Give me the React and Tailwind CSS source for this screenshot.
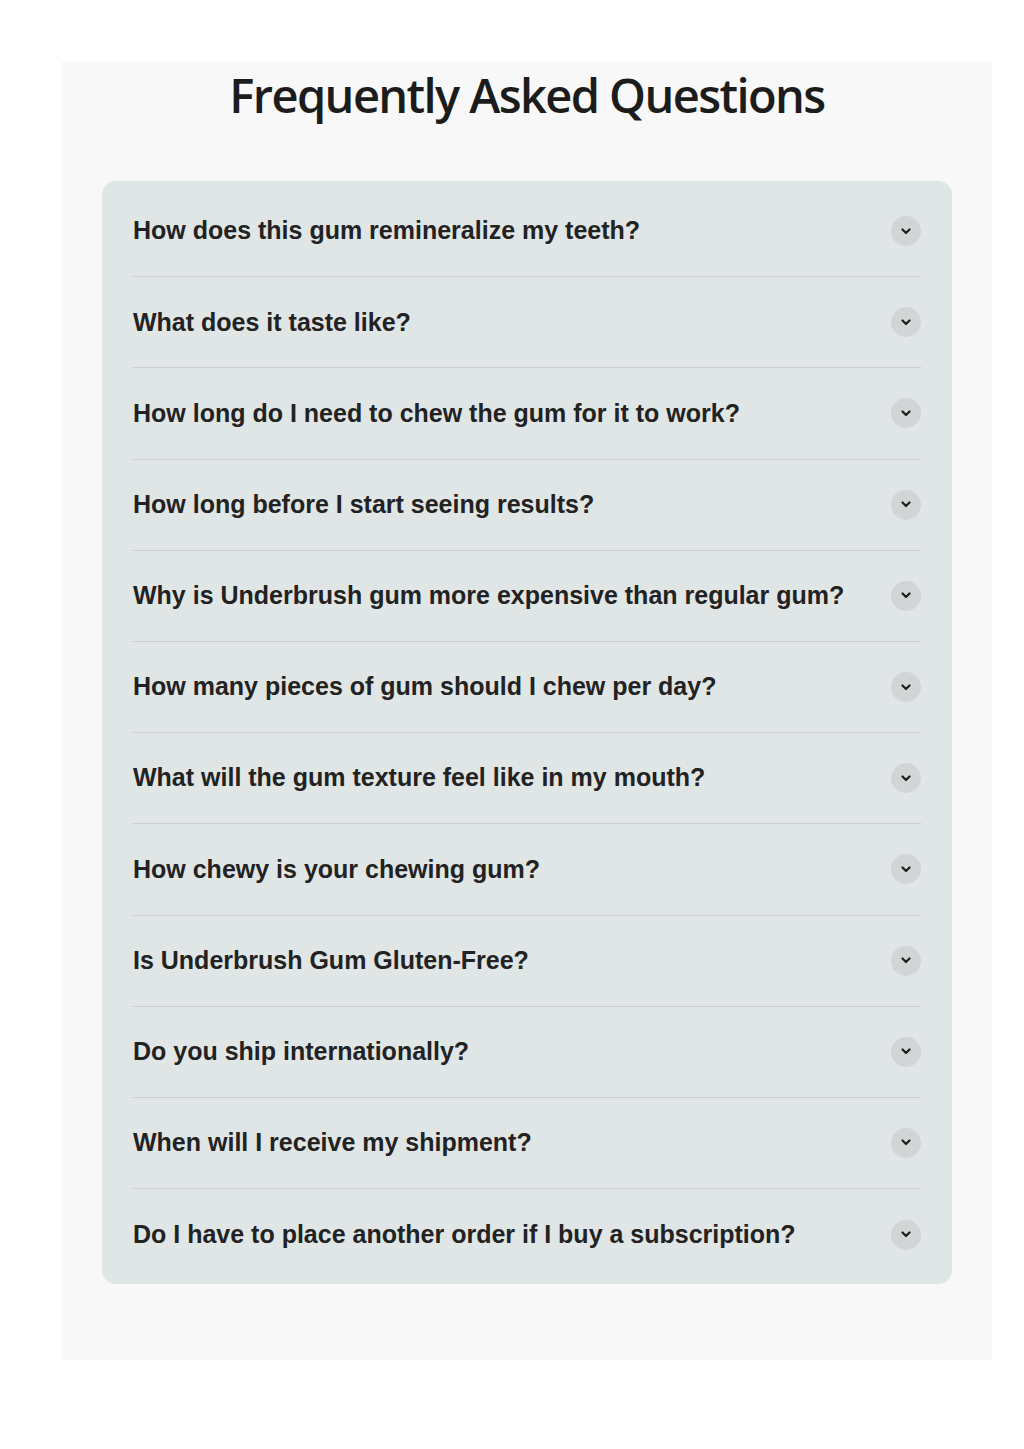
import React from 'react';

const questions = [
  'How does this gum remineralize my teeth?',
  'What does it taste like?',
  'How long do I need to chew the gum for it to work?',
  'How long before I start seeing results?',
  'Why is Underbrush gum more expensive than regular gum?',
  'How many pieces of gum should I chew per day?',
  'What will the gum texture feel like in my mouth?',
  'How chewy is your chewing gum?',
  'Is Underbrush Gum Gluten-Free?',
  'Do you ship internationally?',
  'When will I receive my shipment?',
  'Do I have to place another order if I buy a subscription?',
];

const Chevron = () => (
  <span className="w-[30px] h-[30px] rounded-full bg-[#d1d5d5] flex items-center justify-center shrink-0">
    <svg width="10" height="7" viewBox="0 0 10 7" fill="none">
      <path d="M1.5 1.5 L5 5 L8.5 1.5" stroke="#1f1f1f" strokeWidth="2.2" strokeLinecap="round" strokeLinejoin="round" />
    </svg>
  </span>
);

export default function App() {
  return (
    <div className="min-h-[1449px] bg-white pt-[62px]">
      <section className="ml-[62px] w-[930px] h-[1298px] bg-[#f8f8f8] pt-[3px]">
        {/* Title */}
        <h1 className="text-center text-[47px] leading-[60px] font-semibold tracking-[-1.6px] text-[#1c1c1c] font-['Open_Sans',sans-serif]">
          Frequently Asked Questions
        </h1>

        <div className="mx-[40px] mt-[56px] bg-[#e0e5e5] rounded-[14px] px-[31px] pt-[5px] pb-[4px]">
          {questions.map((q, i) => (
            <div
              key={q}
              className={`flex items-center justify-between h-[91.2px] ${i < questions.length - 1 ? 'border-b border-[#c9cdcd]' : ''}`}
            >
              <span className="text-[25px] font-bold text-[#222] font-['Liberation_Sans',Arial,sans-serif]">{q}</span>
              <Chevron />
            </div>
          ))}
        </div>
      </section>
    </div>
  );
}
